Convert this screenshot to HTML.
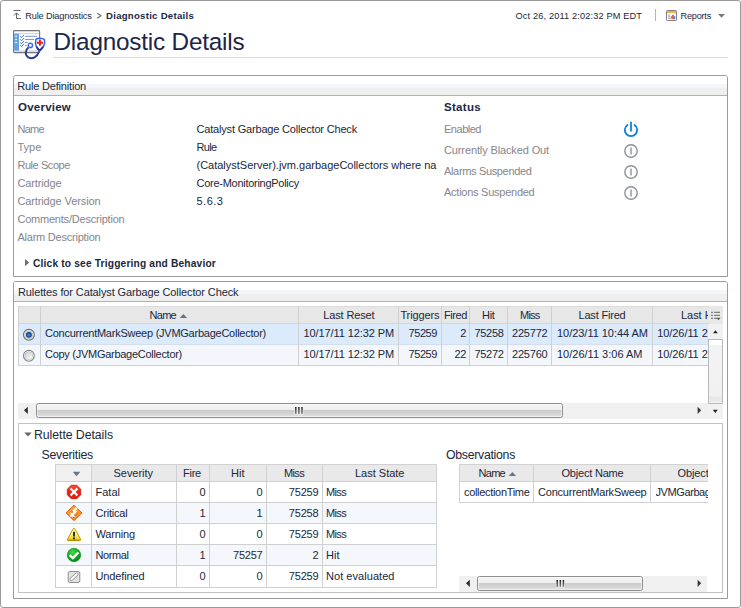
<!DOCTYPE html>
<html>
<head>
<meta charset="utf-8">
<title>Diagnostic Details</title>
<style>
html,body{margin:0;padding:0;background:#fff;}
body{width:741px;height:608px;position:relative;overflow:hidden;font-family:"Liberation Sans",sans-serif;font-size:11px;color:#222;}
.abs{position:absolute;}
.t{position:absolute;white-space:nowrap;line-height:16px;height:16px;}
#frame{position:absolute;left:0;top:0;width:739px;height:606px;border:1px solid #999;border-radius:3px;}
.panel{position:absolute;border:1px solid #9a9a9a;border-radius:3px;box-sizing:border-box;background:#fff;}
.phead{position:absolute;left:0;right:0;top:0;height:19px;border-bottom:1px solid #b2b2b2;background:linear-gradient(#ffffff 0px,#ffffff 8px,#f3f7fb 8px,#f3f7fb 12px,#efefef 12px,#efefef 19px);border-radius:2px 2px 0 0;}
.sub{position:absolute;border:1px solid #c2c2c2;box-sizing:border-box;background:#fff;}
.box{position:absolute;box-sizing:border-box;}
.hl{position:absolute;height:1px;background:#d0d0d0;}
.vl{position:absolute;width:1px;background:#d0d0d0;}
</style>
</head>
<body>
<div id="frame"></div>

<!-- breadcrumb icon -->
<svg class="abs" style="left:13px;top:9px" width="10" height="11" viewBox="0 0 10 11"><path d="M0.5 1.5H7.5M3.5 9.5V4M1 6.5L3.5 3.8L6 6.5M3.5 9.5H8" fill="none" stroke="#6a6a6a" stroke-width="1"/></svg>
<div class="abs" style="left:655px;top:9px;width:1px;height:12px;background:#b4b4b4;"></div>
<svg class="abs" style="left:96px;top:12px" width="7" height="8" viewBox="0 0 7 8"><path d="M1.2 1.2L5 3.7L1.2 6.2" fill="none" stroke="#6c6c6c" stroke-width="1.1"/></svg>
<!-- reports icon -->
<svg class="abs" style="left:666px;top:10px" width="11" height="11" viewBox="0 0 11 11"><rect x="0.5" y="0.5" width="10" height="10" rx="0.8" fill="#fff" stroke="#7d7d82"/><rect x="1" y="1" width="9" height="2.2" fill="#f2b24a"/><path d="M2 5.2H4M2 6.8H4M2 8.4H4" stroke="#6b8fd0" stroke-width="0.8"/><rect x="4.6" y="6" width="1.6" height="3.2" fill="#f08a2c"/><rect x="6.2" y="4.8" width="1.6" height="4.4" fill="#e14538"/><rect x="7.8" y="6.2" width="1.4" height="3" fill="#4f7fd0"/></svg>
<svg class="abs" style="left:718px;top:14.4px" width="7" height="4" viewBox="0 0 7 4"><path d="M0 0H7L3.5 3.7Z" fill="#7a7a7a"/></svg>

<!-- title icon -->
<svg class="abs" style="left:8px;top:24px" width="44" height="40" viewBox="0 0 44 40">
  <rect x="5.6" y="6.6" width="26" height="22" rx="0.8" fill="#fdfdfe" stroke="#74747c" stroke-width="1.1"/>
  <rect x="6.2" y="9.2" width="25" height="0.8" fill="#c9ccd2"/>
  <rect x="6.2" y="26.4" width="25" height="1.6" fill="#d8dade"/>
  <rect x="6.1" y="9.8" width="4.9" height="16.8" fill="#62a2e2"/>
  <rect x="7.2" y="11.6" width="1.8" height="1.3" fill="#e8f2fc"/><rect x="7.2" y="14.8" width="1.8" height="1.3" fill="#e8f2fc"/><rect x="7.2" y="17.8" width="1.8" height="1.3" fill="#e8f2fc"/>
  <path d="M12.3 12.2l1.2 1.5L15.9 11M12.3 15.3l1.2 1.5L15.9 14.1M12.3 18.3l1.2 1.5L15.9 17.1M12.3 21.1l1.2 1.5L15.9 19.9" fill="none" stroke="#4a6cba" stroke-width="0.95"/>
  <path d="M17.1 12.3H28.9M17.1 15.5H26M17.1 18.5H19.8M17.1 21.4H18.8" stroke="#5f8fd0" stroke-width="0.9"/>
  <path d="M20.4 23.6C17 26.4 16.6 31 20.4 33.4C24.4 35.6 29.4 33 31 27.4" fill="none" stroke="#2c3a8e" stroke-width="1.9"/>
  <circle cx="22.4" cy="21.4" r="2.1" fill="#fff" stroke="#3a6af0" stroke-width="1.4"/>
  <path d="M27.9 15.4C27 19.5 28 24 31.6 26.6C35.2 24 37.2 19.5 36.4 15.6C34.5 13.9 29.8 13.8 27.9 15.4Z" fill="#fff" stroke="#3266ee" stroke-width="1.5"/>
  <path d="M28.6 22.6C29.4 24.4 30.4 25.8 31.6 26.6C32.9 25.7 34 24.3 34.9 22.6" fill="none" stroke="#2c3a8e" stroke-width="1.8"/>
  <path d="M31.9 15.6V21.8M28.8 18.7H35" stroke="#f01c24" stroke-width="2"/>
</svg>
<div class="abs" style="left:53px;top:57px;width:675px;height:1px;background:#dcdcdc;"></div>

<!-- Panel 1 -->
<div class="panel" style="left:13px;top:75px;width:715px;height:202px;border-radius:3px 3px 0 0;"><div class="phead"></div></div>
<svg class="abs" style="left:24.8px;top:258.9px" width="5" height="8" viewBox="0 0 5 8"><path d="M0 0L4.2 3.6L0 7.2Z" fill="#6e6e6e"/></svg>
<!-- status icons -->
<svg class="abs" style="left:622.9px;top:121.2px" width="16" height="17" viewBox="0 0 16 17"><path d="M4.5 3.9A6.2 6.2 0 1 0 11.5 3.9" fill="none" stroke="#0f7fe0" stroke-width="1.8" stroke-linecap="round"/><path d="M8 1.4V9.8" stroke="#0f7fe0" stroke-width="1.8" stroke-linecap="round"/></svg>
<svg class="abs" style="left:622.9px;top:142.9px" width="16" height="16" viewBox="0 0 16 16"><circle cx="8" cy="8" r="6.2" fill="#fff" stroke="#8b9399" stroke-width="1.4"/><path d="M8 4.6V11.4" stroke="#8b9399" stroke-width="1.4"/></svg>
<svg class="abs" style="left:622.9px;top:163.9px" width="16" height="16" viewBox="0 0 16 16"><circle cx="8" cy="8" r="6.2" fill="#fff" stroke="#8b9399" stroke-width="1.4"/><path d="M8 4.6V11.4" stroke="#8b9399" stroke-width="1.4"/></svg>
<svg class="abs" style="left:622.9px;top:184.7px" width="16" height="16" viewBox="0 0 16 16"><circle cx="8" cy="8" r="6.2" fill="#fff" stroke="#8b9399" stroke-width="1.4"/><path d="M8 4.6V11.4" stroke="#8b9399" stroke-width="1.4"/></svg>

<!-- Panel 2 -->
<div class="panel" style="left:13px;top:281px;width:715px;height:318px;border-radius:3px 3px 0 0;"><div class="phead"></div></div>

<!-- rulettes table -->
<div class="box" style="left:18px;top:306px;width:691px;height:18px;background:#e7e7e7;border-top:1px solid #dcdcdc;border-bottom:1px solid #d6d6d6;"></div>
<div class="box" style="left:18px;top:324px;width:690px;height:21px;background:#dcebfc;border-bottom:1px solid #d3dfee;"></div>
<div class="box" style="left:18px;top:345px;width:690px;height:20px;background:#f3f7fc;"></div>
<div class="hl" style="left:18px;top:365px;width:690px;"></div>
<div class="vl" style="left:18px;top:306px;height:60px;"></div>
<div class="vl" style="left:40px;top:306px;height:60px;"></div>
<div class="vl" style="left:298px;top:306px;height:60px;"></div>
<div class="vl" style="left:398px;top:306px;height:60px;"></div>
<div class="vl" style="left:441px;top:306px;height:60px;"></div>
<div class="vl" style="left:469px;top:306px;height:60px;"></div>
<div class="vl" style="left:507px;top:306px;height:60px;"></div>
<div class="vl" style="left:551px;top:306px;height:60px;"></div>
<div class="vl" style="left:652px;top:306px;height:60px;"></div>
<!-- sort arrow -->
<svg class="abs" style="left:179px;top:313px" width="9" height="6" viewBox="0 0 9 6"><path d="M0.7 5L4.4 1.1L8.1 5Z" fill="#66748a"/></svg>
<!-- radios -->
<svg class="abs" style="left:21px;top:327px" width="16" height="16" viewBox="0 0 16 16"><defs><radialGradient id="rg1" cx="0.5" cy="0.55" r="0.5"><stop offset="0" stop-color="#3ab4ff"/><stop offset="0.4" stop-color="#1d74d0"/><stop offset="1" stop-color="#14284e"/></radialGradient><linearGradient id="rg2" x1="0" y1="0" x2="1" y2="1"><stop offset="0" stop-color="#cccccc"/><stop offset="0.6" stop-color="#ebebeb"/><stop offset="1" stop-color="#ffffff"/></linearGradient></defs><circle cx="7.9" cy="7.8" r="5.4" fill="#fbfbfb" stroke="#66696c" stroke-width="1.1"/><circle cx="7.9" cy="7.8" r="3.9" fill="#f1f1f1" stroke="#b0b0b0" stroke-width="0.8"/><circle cx="7.9" cy="7.8" r="2.9" fill="url(#rg1)"/></svg>
<svg class="abs" style="left:21px;top:348px" width="16" height="16" viewBox="0 0 16 16"><circle cx="7.9" cy="7.8" r="5.4" fill="#fcfcfc" stroke="#808386" stroke-width="1.1"/><circle cx="7.9" cy="7.8" r="4" fill="url(#rg2)" stroke="#c0c0c0" stroke-width="0.7"/></svg>

<!-- header right chooser + vertical scrollbar -->
<div class="box" style="left:709px;top:306px;width:14px;height:18px;background:#e8e8e8;"></div>
<svg class="abs" style="left:711px;top:310px" width="10" height="11" viewBox="0 -0.8 10 11"><path d="M0 1.5H2M3 1.5H9M0 4.5H2M3 4.5H9M0 7.5H2M3 7.5H6" stroke="#666" stroke-width="1"/><path d="M5.5 7L7.5 9.5L9.5 7Z" fill="#555"/></svg>
<div class="box" style="left:708px;top:324px;width:15px;height:95px;background:#f1f1f1;"></div>
<svg class="abs" style="left:712px;top:329px" width="8" height="5" viewBox="0 0 8 5"><path d="M1 4.2L3.4 1.2L5.8 4.2Z" fill="#222"/></svg>
<div class="box" style="left:708px;top:339px;width:15px;height:65px;background:linear-gradient(#ffffff 0px,#ffffff 5px,#f3f3f3 5px,#f1f1f1 56px,#e9e9e9 57px,#e9e9e9 62px,#f6f6f6 62px);border:1px solid #b9b9b9;"></div>
<svg class="abs" style="left:712px;top:409px" width="8" height="5" viewBox="0 0 8 5"><path d="M0.8 0.8L3.3 3.9L5.8 0.8Z" fill="#222"/></svg>

<!-- horizontal scrollbar -->
<div class="box" style="left:18px;top:403px;width:690px;height:16px;background:#f0f0f0;"></div>
<svg class="abs" style="left:23px;top:406px" width="6" height="9" viewBox="0 0 6 9"><path d="M4.8 0.7L1 4.3L4.8 7.9Z" fill="#2a2a2a"/></svg>
<div class="box" style="left:36px;top:403px;width:527px;height:15px;border:1px solid #8e8e8e;border-radius:2.5px;background:linear-gradient(#f3f3f3 0%,#efefef 46%,#cbcbcb 50%,#d4d4d4 75%,#e2e2e2 100%);box-shadow:inset 0 0 0 1px rgba(255,255,255,0.55);"></div>
<svg class="abs" style="left:292px;top:406px" width="12" height="9" viewBox="0 0 12 9"><defs><linearGradient id="gg407" x1="0" y1="0" x2="0" y2="1"><stop offset="0" stop-color="#1a1a1a"/><stop offset="1" stop-color="#8a8a8a"/></linearGradient></defs><rect x="2.45" y="0.6" width="2.7" height="8" fill="#fff" opacity="0.75"/><rect x="5.55" y="0.6" width="2.7" height="8" fill="#fff" opacity="0.75"/><rect x="8.65" y="0.6" width="2.7" height="8" fill="#fff" opacity="0.75"/><rect x="3.05" y="1" width="1.5" height="7" fill="url(#gg407)"/><rect x="6.15" y="1" width="1.5" height="7" fill="url(#gg407)"/><rect x="9.25" y="1" width="1.5" height="7" fill="url(#gg407)"/></svg>
<svg class="abs" style="left:697px;top:406px" width="6" height="9" viewBox="0 0 6 9"><path d="M0.6 0.7L4.2 4.3L0.6 7.9Z" fill="#3a3a3a"/></svg>

<!-- sub panel -->
<div class="sub" style="left:18px;top:423px;width:705px;height:170px;"></div>
<svg class="abs" style="left:24px;top:432px" width="8" height="5" viewBox="0 0 8 5"><path d="M0.3 0.5H7.7L4 4.6Z" fill="#666"/></svg>

<!-- severities table -->
<div class="box" style="left:55px;top:464px;width:382px;height:18px;background:#e9e9e9;border-top:1px solid #d2d2d2;border-bottom:1px solid #cfcfcf;"></div>
<div class="box" style="left:55px;top:503px;width:382px;height:21px;background:#f4f8fd;"></div>
<div class="box" style="left:55px;top:545px;width:382px;height:21px;background:#f4f8fd;"></div>
<div class="hl" style="left:55px;top:502px;width:382px;"></div>
<div class="hl" style="left:55px;top:523px;width:382px;"></div>
<div class="hl" style="left:55px;top:544px;width:382px;"></div>
<div class="hl" style="left:55px;top:565px;width:382px;"></div>
<div class="hl" style="left:55px;top:587px;width:382px;"></div>
<div class="vl" style="left:55px;top:464px;height:124px;"></div>
<div class="vl" style="left:91px;top:464px;height:124px;"></div>
<div class="vl" style="left:176px;top:464px;height:124px;"></div>
<div class="vl" style="left:209px;top:464px;height:124px;"></div>
<div class="vl" style="left:266px;top:464px;height:124px;"></div>
<div class="vl" style="left:322px;top:464px;height:124px;"></div>
<div class="vl" style="left:436px;top:464px;height:124px;"></div>
<div class="box" style="left:56px;top:465px;width:35px;height:16px;background:#f0f0f0;"></div>
<svg class="abs" style="left:72px;top:471px" width="9" height="6" viewBox="0 0 9 6"><path d="M0.8 0.8H8.3L4.55 5.2Z" fill="#66748a"/></svg>
<!-- severity icons -->
<svg class="abs" style="left:65px;top:483px" width="18" height="18" viewBox="-9.00 -8.95 18 18"><defs><linearGradient id="gF" x1="0" y1="0" x2="0" y2="1"><stop offset="0" stop-color="#f5523a"/><stop offset="0.5" stop-color="#ea2410"/><stop offset="1" stop-color="#e0200c"/></linearGradient><linearGradient id="gC" x1="0" y1="0" x2="0" y2="1"><stop offset="0" stop-color="#ff9a2a"/><stop offset="1" stop-color="#f07200"/></linearGradient><linearGradient id="gW" x1="0" y1="0" x2="0" y2="1"><stop offset="0" stop-color="#fffde4"/><stop offset="0.55" stop-color="#fdec7a"/><stop offset="1" stop-color="#f2c400"/></linearGradient><radialGradient id="gN" cx="0.4" cy="0.3" r="0.75"><stop offset="0" stop-color="#4cd84c"/><stop offset="0.55" stop-color="#10aa1e"/><stop offset="1" stop-color="#088214"/></radialGradient></defs><polygon points="-2.78,-6.70 2.78,-6.70 6.70,-2.78 6.70,2.78 2.78,6.70 -2.78,6.70 -6.70,2.78 -6.70,-2.78" fill="url(#gF)" stroke="#c4150e" stroke-width="0.8"/><path d="M-3.4 -3.4L3.4 3.4M3.4 -3.4L-3.4 3.4" stroke="#fff" stroke-width="2.2" stroke-linecap="butt"/></svg>
<svg class="abs" style="left:65px;top:504px" width="18" height="18" viewBox="-9.00 -8.90 18 18"><polygon points="0,-7.7 8,0 0,7.7 -8,0" fill="url(#gC)" stroke="#e05c00" stroke-width="0.9" stroke-linejoin="round"/><polygon points="0,-6 6.2,0 0,6 -6.2,0" fill="none" stroke="#ffc890" stroke-width="0.5"/><path d="M-3.6 4.1V-1L1.6 4.1Z" fill="#fff"/><path d="M-3.6 4.1L-1 2.6L1.6 4.1Z" fill="#dedede"/><path d="M-1.5 1.7L1.5 -1.3L0 -2.3L2.9 -5" fill="none" stroke="#fff" stroke-width="2.3" stroke-linejoin="miter"/></svg>
<svg class="abs" style="left:65px;top:526px" width="18" height="18" viewBox="-9.00 -8.50 18 18"><path d="M-0.9 -5.6Q0 -6.9 0.9 -5.6L6.5 4.6Q7.2 6.1 5.6 6.1H-5.6Q-7.2 6.1 -6.5 4.6Z" fill="url(#gW)" stroke="#c49a00" stroke-width="1" stroke-linejoin="round"/><path d="M-5.8 5.7H5.8" stroke="#a87c00" stroke-width="0.8"/><path d="M0 -2.8V2" stroke="#111" stroke-width="1.7"/><rect x="-0.9" y="3" width="1.8" height="1.8" fill="#111"/></svg>
<svg class="abs" style="left:65px;top:546px" width="18" height="18" viewBox="-9.00 -9.00 18 18"><circle cx="0" cy="0" r="6.75" fill="url(#gN)" stroke="#0a8c18" stroke-width="0.6"/><path d="M-4.4 0.2L-1.1 3.2L4.5 -2.6" fill="none" stroke="#fff" stroke-width="2.4"/></svg>
<svg class="abs" style="left:65px;top:568px" width="18" height="18" viewBox="-9.00 -8.80 18 18"><rect x="-5.8" y="-5.3" width="11.6" height="11" rx="1.6" fill="#e2e2e2" stroke="#8e8e8e" stroke-width="1"/><path d="M-2.7 2.5L2.7 -2.5" stroke="#8a8a8a" stroke-width="3.4" stroke-linecap="round"/><path d="M-2.7 2.5L2.7 -2.5" stroke="#fff" stroke-width="2" stroke-linecap="round"/></svg>


<!-- observations table -->
<div class="box" style="left:459px;top:464px;width:249px;height:18px;background:#e9e9e9;border-top:1px solid #d2d2d2;border-bottom:1px solid #cfcfcf;"></div>
<div class="hl" style="left:459px;top:502px;width:249px;"></div>
<div class="vl" style="left:459px;top:464px;height:39px;"></div>
<div class="vl" style="left:533px;top:464px;height:39px;"></div>
<div class="vl" style="left:650px;top:464px;height:39px;"></div>
<svg class="abs" style="left:508px;top:471px" width="9" height="6" viewBox="0 0 9 6"><path d="M0.7 5L4.4 1.1L8.1 5Z" fill="#66748a"/></svg>
<!-- obs scrollbar -->
<div class="box" style="left:459px;top:576px;width:248px;height:16px;background:#f0f0f0;"></div>
<svg class="abs" style="left:465px;top:579px" width="6" height="9" viewBox="0 0 6 9"><path d="M4.8 0.7L1 4.3L4.8 7.9Z" fill="#2a2a2a"/></svg>
<div class="box" style="left:477px;top:576px;width:166px;height:15px;border:1px solid #8e8e8e;border-radius:2.5px;background:linear-gradient(#f3f3f3 0%,#efefef 46%,#cbcbcb 50%,#d4d4d4 75%,#e2e2e2 100%);box-shadow:inset 0 0 0 1px rgba(255,255,255,0.55);"></div>
<svg class="abs" style="left:554px;top:579px" width="12" height="9" viewBox="0 0 12 9"><defs><linearGradient id="gg580" x1="0" y1="0" x2="0" y2="1"><stop offset="0" stop-color="#1a1a1a"/><stop offset="1" stop-color="#8a8a8a"/></linearGradient></defs><rect x="1.85" y="0.6" width="2.7" height="8" fill="#fff" opacity="0.75"/><rect x="4.95" y="0.6" width="2.7" height="8" fill="#fff" opacity="0.75"/><rect x="8.05" y="0.6" width="2.7" height="8" fill="#fff" opacity="0.75"/><rect x="2.45" y="1" width="1.5" height="7" fill="url(#gg580)"/><rect x="5.55" y="1" width="1.5" height="7" fill="url(#gg580)"/><rect x="8.65" y="1" width="1.5" height="7" fill="url(#gg580)"/></svg>
<svg class="abs" style="left:697px;top:579px" width="6" height="9" viewBox="0 0 6 9"><path d="M0.6 0.7L4.2 4.3L0.6 7.9Z" fill="#3a3a3a"/></svg>

<div class="t" id="t0" style="left:25.30px;top:7.80px;font-size:9.20px;color:#1c2745;letter-spacing:-0.160px;">Rule Diagnostics</div>
<div class="t" id="t1" style="left:106.00px;top:7.80px;font-size:9.60px;font-weight:bold;color:#1c2745;letter-spacing:0.268px;">Diagnostic Details</div>
<div class="t" id="t2" style="left:515.50px;top:7.80px;font-size:9.20px;color:#20273a;letter-spacing:0.152px;">Oct 26, 2011 2:02:32 PM EDT</div>
<div class="t" id="t3" style="left:680.50px;top:7.80px;font-size:9.20px;color:#1c2745;letter-spacing:-0.239px;">Reports</div>
<div class="t" id="t4" style="left:53.50px;top:33.90px;font-size:24.30px;color:#1c2745;letter-spacing:-0.193px;">Diagnostic Details</div>
<div class="t" id="t5" style="left:17.30px;top:78.00px;font-size:11.00px;color:#20273a;letter-spacing:-0.190px;">Rule Definition</div>
<div class="t" id="t6" style="left:18.00px;top:99.30px;font-size:11.50px;font-weight:bold;color:#1c2745;letter-spacing:0.230px;">Overview</div>
<div class="t" id="t7" style="left:17.40px;top:120.50px;font-size:11.00px;color:#85858d;letter-spacing:-0.686px;">Name</div>
<div class="t" id="t8" style="left:17.40px;top:138.50px;font-size:11.00px;color:#85858d;letter-spacing:0.060px;">Type</div>
<div class="t" id="t9" style="left:17.40px;top:156.50px;font-size:11.00px;color:#85858d;letter-spacing:-0.427px;">Rule Scope</div>
<div class="t" id="t10" style="left:17.40px;top:174.50px;font-size:11.00px;color:#85858d;letter-spacing:-0.128px;">Cartridge</div>
<div class="t" id="t11" style="left:17.40px;top:192.50px;font-size:11.00px;color:#85858d;letter-spacing:-0.112px;">Cartridge Version</div>
<div class="t" id="t12" style="left:17.40px;top:210.50px;font-size:11.00px;color:#85858d;letter-spacing:-0.208px;">Comments/Description</div>
<div class="t" id="t13" style="left:17.40px;top:228.50px;font-size:11.00px;color:#85858d;letter-spacing:-0.218px;">Alarm Description</div>
<div class="t" id="t14" style="left:196.50px;top:120.50px;font-size:11.00px;color:#20273a;letter-spacing:-0.181px;">Catalyst Garbage Collector Check</div>
<div class="t" id="t15" style="left:196.50px;top:138.50px;font-size:11.00px;color:#20273a;letter-spacing:-0.656px;">Rule</div>
<div class="t" id="t16" style="left:196.50px;top:156.50px;font-size:11.00px;color:#20273a;letter-spacing:-0.006px;">(CatalystServer).jvm.garbageCollectors where na</div>
<div class="t" id="t17" style="left:196.50px;top:174.50px;font-size:11.00px;color:#20273a;letter-spacing:-0.272px;">Core-MonitoringPolicy</div>
<div class="t" id="t18" style="left:196.50px;top:192.50px;font-size:11.00px;color:#20273a;letter-spacing:0.506px;">5.6.3</div>
<div class="t" id="t19" style="left:33.00px;top:255.60px;font-size:10.20px;font-weight:bold;color:#20273a;letter-spacing:0.177px;">Click to see Triggering and Behavior</div>
<div class="t" id="t20" style="left:444.00px;top:99.30px;font-size:11.50px;font-weight:bold;color:#1c2745;letter-spacing:0.307px;">Status</div>
<div class="t" id="t21" style="left:444.00px;top:120.50px;font-size:11.00px;color:#85858d;letter-spacing:-0.482px;">Enabled</div>
<div class="t" id="t22" style="left:444.00px;top:141.50px;font-size:11.00px;color:#85858d;letter-spacing:-0.124px;">Currently Blacked Out</div>
<div class="t" id="t23" style="left:444.00px;top:162.50px;font-size:11.00px;color:#85858d;letter-spacing:-0.341px;">Alarms Suspended</div>
<div class="t" id="t24" style="left:444.00px;top:183.50px;font-size:11.00px;color:#85858d;letter-spacing:-0.253px;">Actions Suspended</div>
<div class="t" id="t25" style="left:18.00px;top:283.50px;font-size:11.00px;color:#20273a;letter-spacing:-0.114px;">Rulettes for Catalyst Garbage Collector Check</div>
<div class="t" id="t26" style="left:149.50px;top:306.80px;font-size:11.00px;color:#20273a;letter-spacing:-0.711px;">Name</div>
<div class="t" id="t27" style="left:323.20px;top:306.80px;font-size:11.00px;color:#20273a;letter-spacing:-0.129px;">Last Reset</div>
<div class="t" id="t28" style="left:400.40px;top:306.80px;font-size:11.00px;color:#20273a;letter-spacing:-0.105px;">Triggers</div>
<div class="t" id="t29" style="left:444.00px;top:306.80px;font-size:11.00px;color:#20273a;letter-spacing:-0.412px;">Fired</div>
<div class="t" id="t30" style="left:482.00px;top:306.80px;font-size:11.00px;color:#20273a;letter-spacing:-0.318px;">Hit</div>
<div class="t" id="t31" style="left:520.00px;top:306.80px;font-size:11.00px;color:#20273a;letter-spacing:-0.777px;">Miss</div>
<div class="t" id="t32" style="left:578.50px;top:306.80px;font-size:11.00px;color:#20273a;letter-spacing:-0.192px;">Last Fired</div>
<div class="t" id="t33" style="left:681.00px;top:306.80px;font-size:11.00px;color:#20273a;letter-spacing:-0.037px;width:26.8px;overflow:hidden;">Last Hit</div>
<div class="t" id="t34" style="left:45.00px;top:325.00px;font-size:11.00px;color:#20273a;letter-spacing:-0.246px;">ConcurrentMarkSweep (JVMGarbageCollector)</div>
<div class="t" id="t35" style="left:303.50px;top:325.00px;font-size:11.00px;color:#20273a;letter-spacing:-0.097px;">10/17/11 12:32 PM</div>
<div class="t" id="t36" style="left:408.50px;top:325.00px;font-size:11.00px;color:#20273a;letter-spacing:-0.419px;">75259</div>
<div class="t" id="t37" style="left:460.30px;top:325.00px;font-size:11.00px;color:#20273a;letter-spacing:0.000px;">2</div>
<div class="t" id="t38" style="left:474.50px;top:325.00px;font-size:11.00px;color:#20273a;letter-spacing:-0.319px;">75258</div>
<div class="t" id="t39" style="left:512.00px;top:325.00px;font-size:11.00px;color:#20273a;letter-spacing:-0.203px;">225772</div>
<div class="t" id="t40" style="left:557.00px;top:325.00px;font-size:11.00px;color:#20273a;letter-spacing:-0.032px;">10/23/11 10:44 AM</div>
<div class="t" id="t41" style="left:657.20px;top:325.00px;font-size:11.00px;color:#20273a;letter-spacing:-0.064px;width:50.6px;overflow:hidden;">10/26/11 2:02 PM</div>
<div class="t" id="t42" style="left:45.00px;top:345.50px;font-size:11.00px;color:#20273a;letter-spacing:-0.280px;">Copy (JVMGarbageCollector)</div>
<div class="t" id="t43" style="left:303.50px;top:345.50px;font-size:11.00px;color:#20273a;letter-spacing:-0.097px;">10/17/11 12:32 PM</div>
<div class="t" id="t44" style="left:408.50px;top:345.50px;font-size:11.00px;color:#20273a;letter-spacing:-0.419px;">75259</div>
<div class="t" id="t45" style="left:454.60px;top:345.50px;font-size:11.00px;color:#20273a;letter-spacing:-0.425px;">22</div>
<div class="t" id="t46" style="left:474.50px;top:345.50px;font-size:11.00px;color:#20273a;letter-spacing:-0.319px;">75272</div>
<div class="t" id="t47" style="left:512.00px;top:345.50px;font-size:11.00px;color:#20273a;letter-spacing:-0.203px;">225760</div>
<div class="t" id="t48" style="left:557.00px;top:345.50px;font-size:11.00px;color:#20273a;letter-spacing:0.005px;">10/26/11 3:06 AM</div>
<div class="t" id="t49" style="left:657.20px;top:345.50px;font-size:11.00px;color:#20273a;letter-spacing:-0.064px;width:50.6px;overflow:hidden;">10/26/11 2:02 PM</div>
<div class="t" id="t50" style="left:34.00px;top:426.60px;font-size:12.30px;color:#20273a;letter-spacing:-0.065px;">Rulette Details</div>
<div class="t" id="t51" style="left:41.50px;top:447.00px;font-size:12.30px;color:#20273a;letter-spacing:-0.250px;">Severities</div>
<div class="t" id="t52" style="left:446.00px;top:447.00px;font-size:12.30px;color:#20273a;letter-spacing:-0.288px;">Observations</div>
<div class="t" id="t53" style="left:113.50px;top:464.50px;font-size:11.00px;color:#20273a;letter-spacing:-0.031px;">Severity</div>
<div class="t" id="t54" style="left:183.00px;top:464.50px;font-size:11.00px;color:#20273a;letter-spacing:-0.238px;">Fire</div>
<div class="t" id="t55" style="left:231.00px;top:464.50px;font-size:11.00px;color:#20273a;letter-spacing:0.016px;">Hit</div>
<div class="t" id="t56" style="left:284.00px;top:464.50px;font-size:11.00px;color:#20273a;letter-spacing:-0.652px;">Miss</div>
<div class="t" id="t57" style="left:355.00px;top:464.50px;font-size:11.00px;color:#20273a;letter-spacing:-0.005px;">Last State</div>
<div class="t" id="t58" style="left:95.50px;top:483.60px;font-size:11.00px;color:#20273a;letter-spacing:0.006px;">Fatal</div>
<div class="t" id="t59" style="left:199.60px;top:483.60px;font-size:11.00px;color:#20273a;letter-spacing:0.000px;">0</div>
<div class="t" id="t60" style="left:256.60px;top:483.60px;font-size:11.00px;color:#20273a;letter-spacing:0.000px;">0</div>
<div class="t" id="t61" style="left:288.75px;top:483.60px;font-size:11.00px;color:#20273a;letter-spacing:-0.169px;">75259</div>
<div class="t" id="t62" style="left:326.00px;top:483.60px;font-size:11.00px;color:#20273a;letter-spacing:-0.652px;">Miss</div>
<div class="t" id="t63" style="left:95.50px;top:504.60px;font-size:11.00px;color:#20273a;letter-spacing:-0.203px;">Critical</div>
<div class="t" id="t64" style="left:199.60px;top:504.60px;font-size:11.00px;color:#20273a;letter-spacing:0.000px;">1</div>
<div class="t" id="t65" style="left:256.60px;top:504.60px;font-size:11.00px;color:#20273a;letter-spacing:0.000px;">1</div>
<div class="t" id="t66" style="left:288.75px;top:504.60px;font-size:11.00px;color:#20273a;letter-spacing:-0.169px;">75258</div>
<div class="t" id="t67" style="left:326.00px;top:504.60px;font-size:11.00px;color:#20273a;letter-spacing:-0.652px;">Miss</div>
<div class="t" id="t68" style="left:95.50px;top:525.60px;font-size:11.00px;color:#20273a;letter-spacing:-0.152px;">Warning</div>
<div class="t" id="t69" style="left:199.60px;top:525.60px;font-size:11.00px;color:#20273a;letter-spacing:0.000px;">0</div>
<div class="t" id="t70" style="left:256.60px;top:525.60px;font-size:11.00px;color:#20273a;letter-spacing:0.000px;">0</div>
<div class="t" id="t71" style="left:288.75px;top:525.60px;font-size:11.00px;color:#20273a;letter-spacing:-0.169px;">75259</div>
<div class="t" id="t72" style="left:326.00px;top:525.60px;font-size:11.00px;color:#20273a;letter-spacing:-0.652px;">Miss</div>
<div class="t" id="t73" style="left:95.50px;top:546.60px;font-size:11.00px;color:#20273a;letter-spacing:-0.409px;">Normal</div>
<div class="t" id="t74" style="left:199.60px;top:546.60px;font-size:11.00px;color:#20273a;letter-spacing:0.000px;">1</div>
<div class="t" id="t75" style="left:233.00px;top:546.60px;font-size:11.00px;color:#20273a;letter-spacing:-0.219px;">75257</div>
<div class="t" id="t76" style="left:312.55px;top:546.60px;font-size:11.00px;color:#20273a;letter-spacing:0.000px;">2</div>
<div class="t" id="t77" style="left:326.00px;top:546.60px;font-size:11.00px;color:#20273a;letter-spacing:0.016px;">Hit</div>
<div class="t" id="t78" style="left:95.50px;top:567.60px;font-size:11.00px;color:#20273a;letter-spacing:-0.128px;">Undefined</div>
<div class="t" id="t79" style="left:199.60px;top:567.60px;font-size:11.00px;color:#20273a;letter-spacing:0.000px;">0</div>
<div class="t" id="t80" style="left:256.60px;top:567.60px;font-size:11.00px;color:#20273a;letter-spacing:0.000px;">0</div>
<div class="t" id="t81" style="left:288.75px;top:567.60px;font-size:11.00px;color:#20273a;letter-spacing:-0.169px;">75259</div>
<div class="t" id="t82" style="left:326.00px;top:567.60px;font-size:11.00px;color:#20273a;letter-spacing:0.047px;">Not evaluated</div>
<div class="t" id="t83" style="left:478.50px;top:464.50px;font-size:11.00px;color:#20273a;letter-spacing:-0.711px;">Name</div>
<div class="t" id="t84" style="left:561.50px;top:464.50px;font-size:11.00px;color:#20273a;letter-spacing:-0.200px;">Object Name</div>
<div class="t" id="t85" style="left:677.50px;top:464.50px;font-size:11.00px;color:#20273a;letter-spacing:-0.091px;width:30.5px;overflow:hidden;">Object Type</div>
<div class="t" id="t86" style="left:464.00px;top:483.50px;font-size:11.00px;color:#20273a;letter-spacing:-0.315px;">collectionTime</div>
<div class="t" id="t87" style="left:538.00px;top:483.50px;font-size:11.00px;color:#20273a;letter-spacing:-0.211px;">ConcurrentMarkSweep</div>
<div class="t" id="t88" style="left:655.50px;top:483.50px;font-size:11.00px;color:#20273a;letter-spacing:-0.406px;width:52.5px;overflow:hidden;">JVMGarbageCollector</div>
</body>
</html>
